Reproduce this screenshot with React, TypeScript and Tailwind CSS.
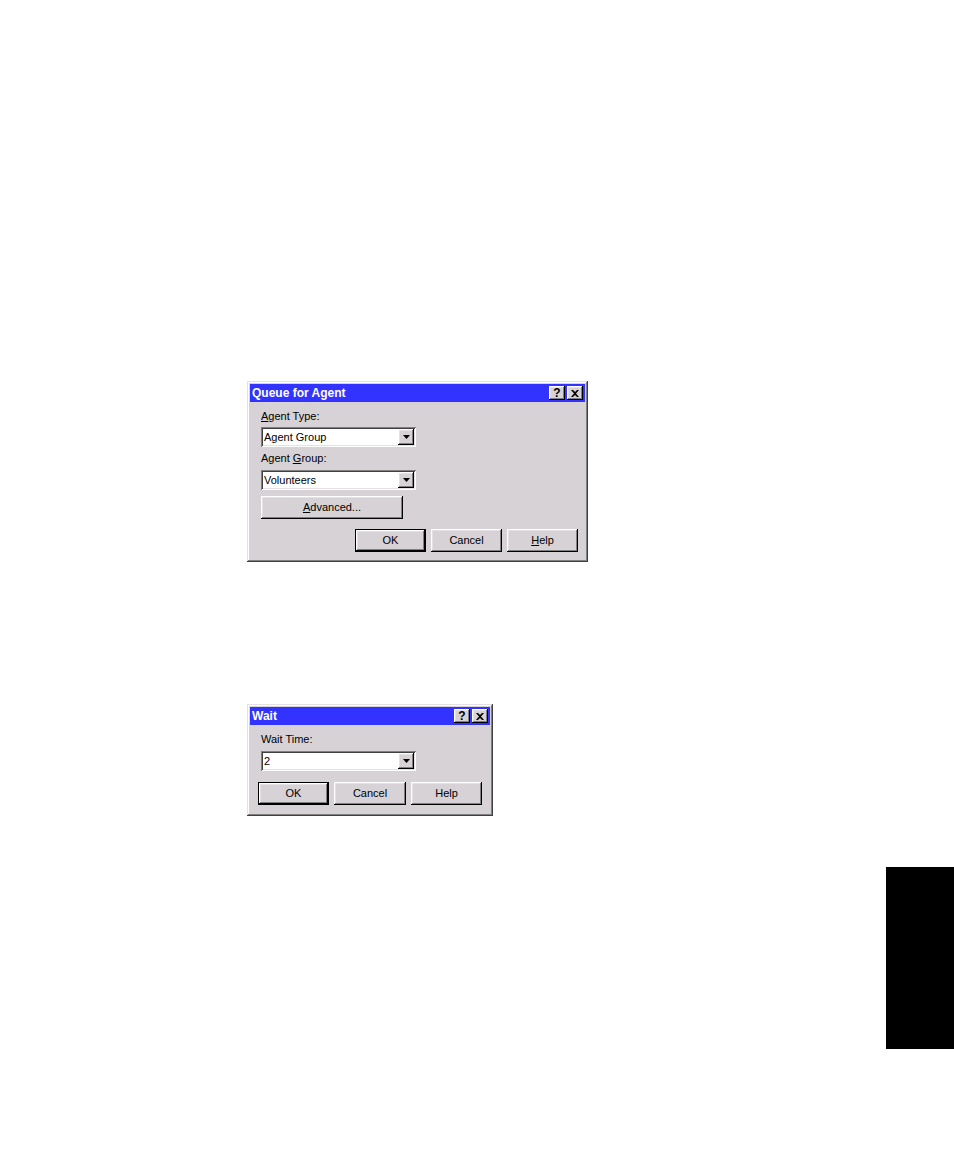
import React from "react";

const raised =
  "shadow-[inset_-1px_-1px_#000,inset_1px_1px_#fff,inset_-2px_-2px_#808080,inset_2px_2px_#e4e0e4]";
const sunken =
  "shadow-[inset_1px_1px_#808080,inset_-1px_-1px_#fff,inset_2px_2px_#404040,inset_-2px_-2px_#e4e0e4]";

function TitleBar({ title }: { title: string }) {
  return (
    <div className="flex items-center justify-between h-[18px] bg-[#3333ff] pl-[2px] pr-[2px]">
      <span className="text-white font-bold text-[12px] leading-none">{title}</span>
      <div className="flex gap-[2px]">
        <div className={`w-[16px] h-[14px] bg-[#d6d2d6] ${raised} flex items-center justify-center text-[12px] font-bold leading-none text-black`}>
          ?
        </div>
        <div className={`w-[16px] h-[14px] bg-[#d6d2d6] ${raised} flex items-center justify-center`}>
          <svg width="8" height="7" viewBox="0 0 8 7">
            <path d="M0 0h2l2 2 2-2h2L5 3.5 8 7H6L4 5 2 7H0l3-3.5z" fill="#000" />
          </svg>
        </div>
      </div>
    </div>
  );
}

function Combo({ value }: { value: string }) {
  return (
    <div className={`w-[155px] h-[20px] bg-white ${sunken} flex items-center p-[2px]`}>
      <span className="flex-1 text-[11px] leading-none pl-[1px] text-black">{value}</span>
      <div className={`w-[16px] h-[16px] bg-[#d6d2d6] ${raised} flex items-center justify-center`}>
        <svg width="7" height="4" viewBox="0 0 7 4">
          <path d="M0 0h7L3.5 4z" fill="#000" />
        </svg>
      </div>
    </div>
  );
}

function Button({ children, primary, w = "w-[72px]" }: { children: React.ReactNode; primary?: boolean; w?: string }) {
  if (primary) {
    return (
      <div className={`${w} h-[23px] border border-black`}>
        <div className={`w-full h-full bg-[#d6d2d6] ${raised} flex items-center justify-center text-[11px] text-black`}>
          {children}
        </div>
      </div>
    );
  }
  return (
    <div className={`${w} h-[23px] bg-[#d6d2d6] ${raised} flex items-center justify-center text-[11px] text-black`}>
      {children}
    </div>
  );
}

const win =
  "bg-[#d6d2d6] p-[3px] shadow-[inset_-1px_-1px_#404040,inset_1px_1px_#e4e0e4,inset_-2px_-2px_#808080,inset_2px_2px_#fff]";

export default function App() {
  return (
    <div
      className="w-[954px] h-[1162px] bg-white flex flex-col items-start pt-[381px] pl-[247px]"
      style={{ fontFamily: '"Liberation Sans", Arial, sans-serif' }}
    >
      {/* Queue for Agent */}
      <div className={`w-[341px] h-[181px] ${win} flex flex-col`}>
        <TitleBar title="Queue for Agent" />
        <div className="flex flex-col pl-[11px] pr-[7px]">
          <div className="mt-[8px] text-[11px] leading-[13px] text-black">
            <u>A</u>gent Type:
          </div>
          <div className="mt-[4px]">
            <Combo value="Agent Group" />
          </div>
          <div className="mt-[5px] text-[11px] leading-[13px] text-black">
            Agent <u>G</u>roup:
          </div>
          <div className="mt-[5px]">
            <Combo value="Volunteers" />
          </div>
          <div className="mt-[6px]">
            <Button w="w-[142px]">
              <span>
                <u>A</u>dvanced...
              </span>
            </Button>
          </div>
          <div className="mt-[10px] flex justify-end gap-[5px]">
            <Button primary w="w-[71px]">OK</Button>
            <Button w="w-[71px]">Cancel</Button>
            <Button w="w-[71px]">
              <span>
                <u>H</u>elp
              </span>
            </Button>
          </div>
        </div>
      </div>

      {/* Wait */}
      <div className={`mt-[142px] w-[246px] h-[112px] ${win} flex flex-col`}>
        <TitleBar title="Wait" />
        <div className="flex flex-col pl-[8px] pr-[8px]">
          <div className="mt-[8px] pl-[3px] text-[11px] leading-[13px] text-black">Wait Time:</div>
          <div className="mt-[5px] pl-[3px]">
            <Combo value="2" />
          </div>
          <div className="mt-[11px] flex gap-[5px]">
            <Button primary>OK</Button>
            <Button w="w-[73px]">Cancel</Button>
            <Button>Help</Button>
          </div>
        </div>
      </div>

      {/* black edge tab */}
      <div className="mt-[51px] self-end w-[68px] h-[182px] bg-black" />
    </div>
  );
}
